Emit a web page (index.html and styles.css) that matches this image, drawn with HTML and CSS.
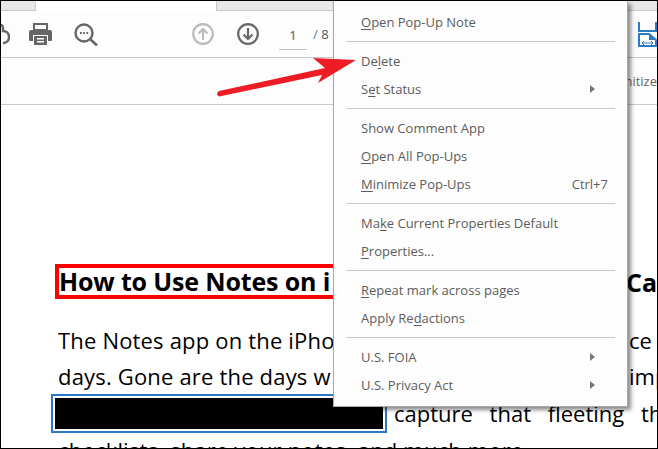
FILE: index.html
```html
<!DOCTYPE html>
<html lang="en">
<head>
<meta charset="utf-8">
<title>PDF comment menu</title>
<link rel="stylesheet" href="styles.css">
</head>
<body>
<div class="frame">
  <div class="tabs">
    <div class="tab tab-left"></div>
    <div class="tab-active"></div>
    <div class="tab tab-right"></div>
  </div>
  <div class="toolbar">
    <svg class="ico ico-hand" width="9" height="22" viewBox="0 0 9 22"><path d="M-3 3c3-2 5-1 5 2v3c3 0 6 2 6 6s-3 6-6 6" fill="none" stroke="#666" stroke-width="2.4"/></svg>
    <svg class="ico ico-print" width="23" height="22" viewBox="0 0 23 22"><path d="M5 1h13v6H5z" fill="none" stroke="#666" stroke-width="2"/><path d="M2 7h19a2 2 0 0 1 2 2v8a1 1 0 0 1-1 1h-3v-6H4v6H1a1 1 0 0 1-1-1V9a2 2 0 0 1 2-2z" fill="#666"/><path d="M5 13h13v9H5z" fill="#666"/><path d="M8 15h7v1.500H8zM8 18h7v1.500H8z" fill="#fff"/></svg>
    <svg class="ico ico-find" width="24" height="23" viewBox="0 0 24 23"><circle cx="10" cy="10" r="8.500" fill="none" stroke="#666" stroke-width="2.400"/><path d="M16 16l7 6.500" stroke="#666" stroke-width="2.600"/><path d="M6 10h1.800M9.200 10H11M12.400 10h1.800" stroke="#666" stroke-width="2"/></svg>
    <svg class="ico ico-up" width="22" height="22" viewBox="0 0 22 22"><circle cx="11" cy="11" r="9.800" fill="none" stroke="#bbb" stroke-width="2.200"/><path d="M11 17V6M6.500 10.500L11 6l4.500 4.500" fill="none" stroke="#bbb" stroke-width="2.200"/></svg>
    <svg class="ico ico-down" width="22" height="22" viewBox="0 0 22 22"><circle cx="11" cy="11" r="9.800" fill="none" stroke="#666" stroke-width="2.200"/><path d="M11 5v11M6.500 11.500L11 16l4.500-4.500" fill="none" stroke="#666" stroke-width="2.200"/></svg>
    <div class="page-input">1</div>
    <div class="page-total"><span class="slash">/</span> 8</div>
    <svg class="ico ico-fit" width="20" height="26" viewBox="0 0 20 26"><path d="M2 1v9h17V1M2 25V13h10l7 6v6z" fill="none" stroke="#2a7bc8" stroke-width="2"/><path d="M12 13v6h7z" fill="#2a7bc8"/><path d="M5 22h11M5 22l2-2M5 22l2 2M16 22l-2-2M16 22l-2 2" stroke="#2a7bc8" stroke-width="1" fill="none"/></svg>
  </div>
  <div class="subbar"><span class="sub-text">nitize</span></div>
  <div class="doc">
    <div class="heading-row">
      <h1 class="heading">How to Use Notes on i</h1>
      <span class="heading-end">Ca</span>
    </div>
    <p class="line"><span class="line-main">The Notes app on the iPho</span><span class="line-end">ce</span></p>
    <p class="line line-tight"><span class="line-main">days. Gone are the days w</span><span class="line-end">imp</span></p>
    <p class="line line-redact"><span class="redact"><span class="redact-fill"></span></span><span class="spread">capture that fleeting th</span></p>
    <p class="line"><span class="line-main">checklists, share your notes, and much more.</span></p>
  </div>
</div>

<svg class="arrow" width="150" height="45" viewBox="0 0 150 45"><path d="M4 36 L110 13 L98 3 L141 5 L103 28 L107 20 L4 41.500 Q0 39 4 36Z" fill="#ee1c25"/></svg>

<div class="menu">
  <div class="item"><span><u>O</u>pen Pop-Up Note</span></div>
  <div class="sep"></div>
  <div class="item"><span>De<u>l</u>ete</span></div>
  <div class="item"><span>S<u>e</u>t Status</span><i class="sub"></i></div>
  <div class="sep"></div>
  <div class="item"><span>Show Comment App</span></div>
  <div class="item"><span><u>O</u>pen All Pop-Ups</span></div>
  <div class="item"><span><u>M</u>inimize Pop-Ups</span><span class="key">Ctrl+7</span></div>
  <div class="sep"></div>
  <div class="item"><span>Ma<u>k</u>e Current Properties Default</span></div>
  <div class="item"><span><u>P</u>roperties...</span></div>
  <div class="sep"></div>
  <div class="item"><span><u>R</u>epeat mark across pages</span></div>
  <div class="item"><span>Apply Re<u>d</u>actions</span></div>
  <div class="sep"></div>
  <div class="item"><span>U.S. FOIA</span><i class="sub"></i></div>
  <div class="item"><span>U.S. Privacy Act</span><i class="sub"></i></div>
</div>
</body>
</html>
```
FILE: styles.css
```css
* { box-sizing: border-box; }
html, body { margin: 0; padding: 0; }
body { width: 658px; height: 449px; overflow: hidden; background: #fff; position: relative; font-family: "Open Sans", "Noto Sans", sans-serif; }
.frame { width: 658px; height: 449px; border: 1px solid #000; overflow: hidden; display: flex; flex-direction: column; background: #fff; }

.tabs { display: flex; height: 10px; flex: none; background: #fff; }
.tab { height: 10px; background: #e8e8e8; border-bottom: 1px solid #c8c8c8; }
.tab-left { width: 35px; border-right: 1px solid #c8c8c8; }
.tab-active { width: 180px; background: #fff; }
.tab-right { flex: 1; border-left: 1px solid #c8c8c8; }

.toolbar { height: 47px; flex: none; background: #fdfdfd; border-bottom: 1px solid #c9c9c9; display: flex; align-items: center; }
.ico { flex: none; display: block; }
.ico-hand { margin-left: 0; }
.ico-print { margin-left: 19px; }
.ico-find { margin-left: 22px; }
.ico-up { margin-left: 94px; }
.ico-down { margin-left: 23px; }
.page-input { width: 28px; height: 28px; margin-left: 20px; margin-top: 3px; border-bottom: 1px solid #c4c4c4; color: #555; font-size: 13px; line-height: 26px; text-align: center; flex: none; }
.page-total { margin-left: 6px; width: 24px; color: #555; font-size: 13px; flex: none; white-space: nowrap; }
.slash { color: #4b7fb5; }
.ico-fit { margin-left: 300px; margin-top: -1px; }

.subbar { height: 47px; flex: none; background: #fdfdfd; border-bottom: 1px solid #c9c9c9; display: flex; justify-content: flex-end; align-items: center; }
.sub-text { font-size: 13px; color: #666; white-space: nowrap; margin-top: -1px; }

.doc { flex: 1; background: #fff; padding: 159px 0 0 54px; color: #000; overflow: hidden; }
.heading-row { display: grid; grid-template-columns: 573px auto; align-items: center; height: 35px; margin-bottom: 23px; white-space: nowrap; }
.heading { margin: 0; width: 400px; height: 35px; border: 4px solid #f00; font-size: 25px; font-weight: 700; line-height: 26px; letter-spacing: -.15px; white-space: nowrap; overflow: hidden; }
.heading-end { font-size: 25px; font-weight: 700; margin-left: -2px; }
.line { margin: 0; height: 36.500px; font-size: 22px; line-height: 36px; white-space: nowrap; display: grid; grid-template-columns: 571px auto; padding-left: 3px; }
.line-tight { margin-top: -1px; margin-bottom: 1px; }
.line-main { letter-spacing: .18px; }
.line-redact { display: flex; padding-left: 0; margin-left: -4px; align-items: center; }
.redact { display: block; flex: none; width: 336px; height: 39px; border: 2px solid #2a78c6; padding: 2px; margin-right: 7px; }
.redact-fill { display: block; height: 100%; background: #000; }
.spread { word-spacing: 11px; }

.arrow { position: absolute; left: 215px; top: 55px; display: block; z-index: 3; }

.menu { position: absolute; left: 333px; top: 1px; width: 295px; height: 406px; padding: 7px 12px; background: #fdfdfd; border: 1px solid #a8a8a8; border-top: 0; box-shadow: 3px 3px 4px rgba(0,0,0,.45); color: #5c5c5c; font-size: 13px; z-index: 2; }
.item { height: 28px; display: flex; align-items: center; justify-content: space-between; padding: 0 7px 0 15px; white-space: nowrap; position: relative; }
.sep { height: 1px; margin: 5px 0; background: #c8c8c8; }
.sub { position: absolute; right: 20px; top: 10px; width: 0; height: 0; border-left: 5px solid #777; border-top: 4px solid transparent; border-bottom: 4px solid transparent; }
u { text-underline-offset: 2px; }
```
